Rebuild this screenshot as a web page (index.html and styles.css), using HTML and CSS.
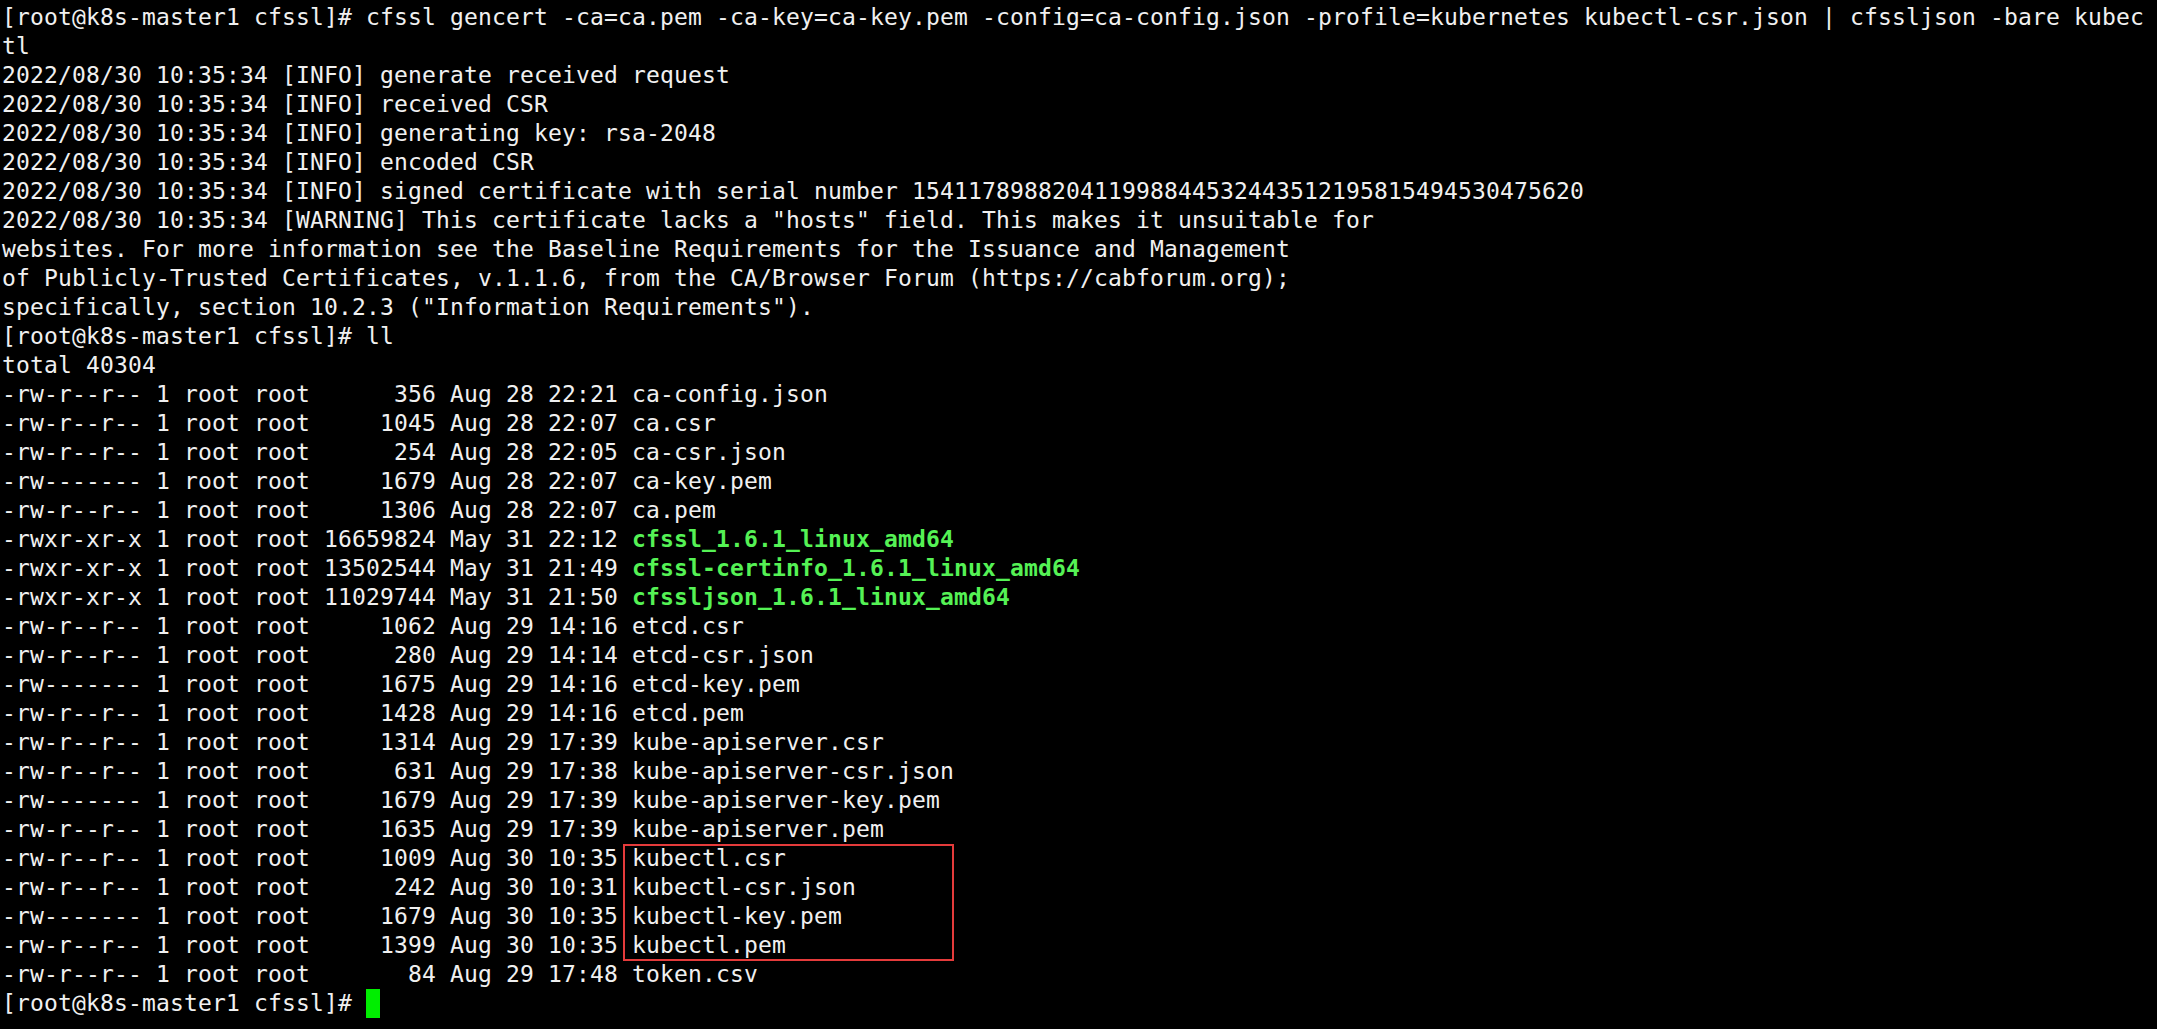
FILE: index.html
```html
<!DOCTYPE html>
<html lang="en">
<head>
<meta charset="utf-8">
<title>cfssl terminal</title>
<link rel="stylesheet" href="styles.css">
</head>
<body>
<div class="term">
<div class="line">[root@k8s-master1 cfssl]# cfssl gencert -ca=ca.pem -ca-key=ca-key.pem -config=ca-config.json -profile=kubernetes kubectl-csr.json | cfssljson -bare kubec</div>
<div class="line">tl</div>
<div class="line">2022/08/30 10:35:34 [INFO] generate received request</div>
<div class="line">2022/08/30 10:35:34 [INFO] received CSR</div>
<div class="line">2022/08/30 10:35:34 [INFO] generating key: rsa-2048</div>
<div class="line">2022/08/30 10:35:34 [INFO] encoded CSR</div>
<div class="line">2022/08/30 10:35:34 [INFO] signed certificate with serial number 154117898820411998844532443512195815494530475620</div>
<div class="line">2022/08/30 10:35:34 [WARNING] This certificate lacks a "hosts" field. This makes it unsuitable for</div>
<div class="line">websites. For more information see the Baseline Requirements for the Issuance and Management</div>
<div class="line">of Publicly-Trusted Certificates, v.1.1.6, from the CA/Browser Forum (https://cabforum.org);</div>
<div class="line">specifically, section 10.2.3 ("Information Requirements").</div>
<div class="line">[root@k8s-master1 cfssl]# ll</div>
<div class="line">total 40304</div>
<div class="line">-rw-r--r-- 1 root root      356 Aug 28 22:21 ca-config.json</div>
<div class="line">-rw-r--r-- 1 root root     1045 Aug 28 22:07 ca.csr</div>
<div class="line">-rw-r--r-- 1 root root      254 Aug 28 22:05 ca-csr.json</div>
<div class="line">-rw------- 1 root root     1679 Aug 28 22:07 ca-key.pem</div>
<div class="line">-rw-r--r-- 1 root root     1306 Aug 28 22:07 ca.pem</div>
<div class="line">-rwxr-xr-x 1 root root 16659824 May 31 22:12 <span class="exec">cfssl_1.6.1_linux_amd64</span></div>
<div class="line">-rwxr-xr-x 1 root root 13502544 May 31 21:49 <span class="exec">cfssl-certinfo_1.6.1_linux_amd64</span></div>
<div class="line">-rwxr-xr-x 1 root root 11029744 May 31 21:50 <span class="exec">cfssljson_1.6.1_linux_amd64</span></div>
<div class="line">-rw-r--r-- 1 root root     1062 Aug 29 14:16 etcd.csr</div>
<div class="line">-rw-r--r-- 1 root root      280 Aug 29 14:14 etcd-csr.json</div>
<div class="line">-rw------- 1 root root     1675 Aug 29 14:16 etcd-key.pem</div>
<div class="line">-rw-r--r-- 1 root root     1428 Aug 29 14:16 etcd.pem</div>
<div class="line">-rw-r--r-- 1 root root     1314 Aug 29 17:39 kube-apiserver.csr</div>
<div class="line">-rw-r--r-- 1 root root      631 Aug 29 17:38 kube-apiserver-csr.json</div>
<div class="line">-rw------- 1 root root     1679 Aug 29 17:39 kube-apiserver-key.pem</div>
<div class="line">-rw-r--r-- 1 root root     1635 Aug 29 17:39 kube-apiserver.pem</div>
<div class="group">
<div class="line">-rw-r--r-- 1 root root     1009 Aug 30 10:35 kubectl.csr</div>
<div class="line">-rw-r--r-- 1 root root      242 Aug 30 10:31 kubectl-csr.json</div>
<div class="line">-rw------- 1 root root     1679 Aug 30 10:35 kubectl-key.pem</div>
<div class="line">-rw-r--r-- 1 root root     1399 Aug 30 10:35 kubectl.pem</div>
<div class="highlight"></div>
</div>
<div class="line">-rw-r--r-- 1 root root       84 Aug 29 17:48 token.csv</div>
<div class="line">[root@k8s-master1 cfssl]# <span class="cursor"> </span></div>
</div>
</body>
</html>
```
FILE: styles.css
```css
html, body {
  margin: 0;
  padding: 0;
  background: #000000;
}

.term {
  padding: 3px 0 0 2px;
  font-family: "DejaVu Sans Mono", "Liberation Mono", monospace;
  font-size: 23px;
  letter-spacing: 0.153px;
  line-height: 29px;
  color: #f0f0f0;
}

.line {
  height: 29px;
  white-space: pre;
}

.exec {
  color: #55f255;
  font-weight: bold;
}

.group {
  position: relative;
}

.highlight {
  position: absolute;
  left: 621px;
  top: 0;
  width: 327px;
  height: 113px;
  border: 2px solid #e53b3b;
  pointer-events: none;
}

.cursor {
  display: inline-block;
  width: 14px;
  height: 29px;
  vertical-align: top;
  background: #00ee00;
}
```
